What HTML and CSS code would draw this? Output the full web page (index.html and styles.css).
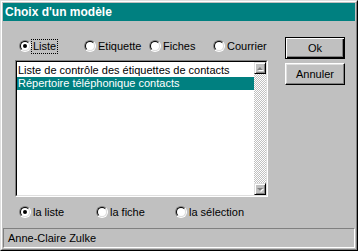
FILE: index.html
```html
<!DOCTYPE html>
<html lang="fr">
<head>
<meta charset="utf-8">
<title>Choix d'un modèle</title>
<link rel="stylesheet" href="styles.css">
</head>
<body>
<div class="window">
  <div class="frame">
    <div class="titlebar">Choix d'un modèle</div>
    <div class="content">
      <div class="left">
        <div class="radios top">
          <div class="radio checked focus"><span class="rb"><span class="rbi"></span></span><span class="lbl">Liste</span></div>
          <div class="radio"><span class="rb"><span class="rbi"></span></span><span class="lbl">Etiquette</span></div>
          <div class="radio"><span class="rb"><span class="rbi"></span></span><span class="lbl">Fiches</span></div>
          <div class="radio"><span class="rb"><span class="rbi"></span></span><span class="lbl">Courrier</span></div>
        </div>
        <div class="listbox">
          <div class="listin">
            <div class="items">
              <div class="item">Liste de contrôle des étiquettes de contacts</div>
              <div class="item sel">Répertoire téléphonique contacts</div>
            </div>
            <div class="scrollbar">
              <div class="sbtn"><span class="arrow up"></span></div>
              <div class="track"></div>
              <div class="sbtn"><span class="arrow down"></span></div>
            </div>
          </div>
        </div>
        <div class="radios bottom">
          <div class="radio checked"><span class="rb"><span class="rbi"></span></span><span class="lbl">la liste</span></div>
          <div class="radio"><span class="rb"><span class="rbi"></span></span><span class="lbl">la fiche</span></div>
          <div class="radio"><span class="rb"><span class="rbi"></span></span><span class="lbl">la sélection</span></div>
        </div>
      </div>
      <div class="right">
        <button class="btn default">Ok</button>
        <button class="btn">Annuler</button>
      </div>
    </div>
    <div class="status">Anne-Claire Zulke</div>
  </div>
</div>
</body>
</html>
```
FILE: styles.css
```css
body {
  margin: 0;
  background: #c0c0c0;
}
.window {
  width: 358px;
  height: 251px;
  box-sizing: border-box;
  border: 1px solid;
  border-color: #dfdfdf #000 #000 #dfdfdf;
  background: #c0c0c0;
  font-family: "Liberation Sans", Arial, sans-serif;
  font-size: 11px;
  color: #000;
}
.frame {
  height: 100%;
  box-sizing: border-box;
  border: 1px solid;
  border-color: #fff #808080 #808080 #fff;
  padding: 1px;
  display: flex;
  flex-direction: column;
}
.titlebar {
  height: 18px;
  background: #008080;
  color: #fff;
  font-weight: bold;
  font-size: 12px;
  line-height: 18px;
  padding-left: 2px;
  white-space: nowrap;
}
.content {
  display: flex;
  padding-left: 12px;
}
.left {
  width: 253px;
  display: flex;
  flex-direction: column;
}
.radios {
  display: grid;
  height: 16px;
  align-items: center;
  margin-left: 4px;
}
.radios.top {
  margin-top: 17px;
  grid-template-columns: 65px 65px 64px auto;
}
.radios.bottom {
  margin-top: 7px;
  grid-template-columns: 77px 79px auto;
}
.radio {
  display: flex;
  align-items: center;
  white-space: nowrap;
}
.rb {
  width: 12px;
  height: 12px;
  box-sizing: border-box;
  border-radius: 50%;
  border: 1px solid;
  border-color: #808080 #fff #fff #808080;
  flex: none;
}
.rbi {
  width: 10px;
  height: 10px;
  box-sizing: border-box;
  border-radius: 50%;
  border: 1px solid;
  border-color: #000 #dfdfdf #dfdfdf #000;
  background: #fff;
  display: flex;
  align-items: center;
  justify-content: center;
}
.checked .rbi::after {
  content: "";
  width: 4px;
  height: 4px;
  border-radius: 50%;
  background: #000;
}
.lbl {
  padding: 0 1px;
  border: 1px dotted transparent;
  line-height: 13px;
}
.focus .lbl {
  border-color: #000;
}
.listbox {
  margin-top: 6px;
  height: 137px;
  box-sizing: border-box;
  border: 1px solid;
  border-color: #808080 #fff #fff #808080;
}
.listin {
  height: 100%;
  box-sizing: border-box;
  border: 1px solid;
  border-color: #000 #dfdfdf #dfdfdf #000;
  background: #fff;
  display: flex;
}
.items {
  flex: 1;
  padding-top: 2px;
  min-width: 0;
}
.item {
  height: 13px;
  line-height: 13px;
  padding-left: 1px;
  white-space: nowrap;
  overflow: hidden;
}
.item.sel {
  background: #008080;
  color: #fff;
}
.scrollbar {
  width: 12px;
  flex: none;
  display: flex;
  flex-direction: column;
  background-color: #fff;
  background-image: conic-gradient(#c0c0c0 25%, #fff 0 50%, #c0c0c0 0 75%, #fff 0);
  background-size: 2px 2px;
}
.sbtn {
  height: 12px;
  box-sizing: border-box;
  border: 1px solid;
  border-color: #dfdfdf #000 #000 #dfdfdf;
  box-shadow: inset 1px 1px #fff, inset -1px -1px #808080;
  background: #c0c0c0;
  display: flex;
  align-items: center;
  justify-content: center;
}
.track {
  flex: 1;
}
.arrow {
  width: 0;
  height: 0;
  border-left: 3px solid transparent;
  border-right: 3px solid transparent;
  filter: drop-shadow(1px 1px 0 #fff);
}
.arrow.up {
  border-bottom: 3px solid #808080;
}
.arrow.down {
  border-top: 3px solid #808080;
}
.right {
  margin-left: 17px;
  padding-top: 16px;
  display: flex;
  flex-direction: column;
  gap: 4px;
}
.btn {
  width: 60px;
  height: 22px;
  padding: 0;
  margin: 0;
  font-family: inherit;
  font-size: 11px;
  color: #000;
  background: #c0c0c0;
  border: 1px solid;
  border-color: #fff #000 #000 #fff;
  box-shadow: inset -1px -1px #808080, inset 1px 1px #dfdfdf;
}
.btn.default {
  border-color: #000;
  box-shadow: inset 1px 1px #fff, inset -1px -1px #000, inset -2px -2px #808080;
}
.status {
  margin-top: auto;
  height: 20px;
  box-sizing: border-box;
  border: 1px solid;
  border-color: #808080 #fff #fff #808080;
  padding-left: 4px;
  line-height: 18px;
  white-space: nowrap;
}
```
